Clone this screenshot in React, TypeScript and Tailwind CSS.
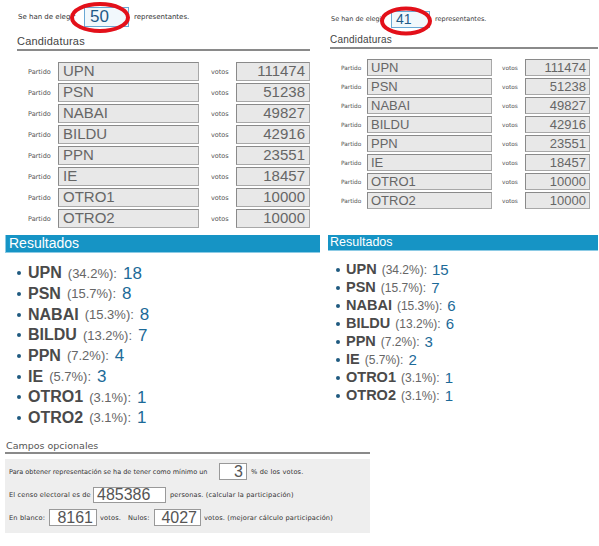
import React from 'react';

const parties = [
  { name: 'UPN', votes: 111474, pct: '34.2', left: 18, right: 15 },
  { name: 'PSN', votes: 51238, pct: '15.7', left: 8, right: 7 },
  { name: 'NABAI', votes: 49827, pct: '15.3', left: 8, right: 6 },
  { name: 'BILDU', votes: 42916, pct: '13.2', left: 7, right: 6 },
  { name: 'PPN', votes: 23551, pct: '7.2', left: 4, right: 3 },
  { name: 'IE', votes: 18457, pct: '5.7', left: 3, right: 2 },
  { name: 'OTRO1', votes: 10000, pct: '3.1', left: 1, right: 1 },
  { name: 'OTRO2', votes: 10000, pct: '3.1', left: 1, right: 1 },
];

const small = "font-['DejaVu_Sans',Verdana,sans-serif] text-[#333] whitespace-nowrap";
const box = "bg-[#e8e8e8] border border-[#a8a8a8] border-t-[#8a8a8a] border-l-[#8a8a8a] text-[#666] font-['Liberation_Sans',Arial,sans-serif] flex items-center";

const Ellipse = ({ cx, cy, rx, ry }: { cx: number; cy: number; rx: number; ry: number }) => (
  <svg className="absolute left-0 top-0 pointer-events-none" width={599} height={60}>
    <ellipse cx={cx} cy={cy} rx={rx} ry={ry} fill="none" stroke="#e3101a" strokeWidth="4" />
  </svg>
);

export default function App() {
  return (
    <div className="relative w-[599px] h-[546px] bg-white overflow-hidden font-['Liberation_Sans',Arial,sans-serif]">
      <div className="flex h-[437px]">
        {/* Left capture */}
        <div className="w-[320px] shrink-0">
          <div className="flex items-center h-[20px] mt-[7px] pl-[18px]">
            <span className={`${small} w-[66px] text-[7px]`}>Se han de elegir</span>
            <div className="w-[45px] h-[20px] bg-[#f1f8fc] border border-[#6aa8d4] flex items-center pl-[5px] text-[17px] text-[#1f5b88]">50</div>
            <span className={`${small} ml-[5px] text-[7px]`}>representantes.</span>
          </div>
          <div className="ml-[17px] w-[293px] mt-[6px] text-[11px] leading-[16px] text-[#444] border-b-2 border-[#8a8a8a] tracking-[0.2px]">Candidaturas</div>
          <div className="mt-[11px] flex flex-col gap-[2px]">
            {parties.map((p) => (
              <div key={p.name} className="flex items-center h-[19px] pl-[28px]">
                <span className={`${small} w-[30px] text-[6.5px] text-[#555] pt-[3px]`}>Partido</span>
                <div className={`${box} w-[141px] h-[19px] pl-[4px] text-[15px]`}>{p.name}</div>
                <span className={`${small} w-[25px] ml-[12px] text-[6.5px] text-[#555] pt-[3px]`}>votos</span>
                <div className={`${box} w-[74px] h-[19px] pr-[4px] justify-end text-[15px]`}>{p.votes}</div>
              </div>
            ))}
          </div>
          <div className="ml-[5px] w-[315px] h-[18px] mt-[7px] bg-[#1694c5] border-b border-[#8ccbe5] border-l border-l-[#8ccbe5] text-white text-[14px] leading-[17px] pl-[3px]">Resultados</div>
          <ul className="mt-[10px] pl-[17px]">
            {parties.map((p) => (
              <li key={p.name} className="flex items-center h-[20.7px]">
                <span className="w-[4px] h-[4px] rounded-full bg-[#1f5a80] mr-[7px]" />
                <span className="font-bold text-[16px] text-[#4a4a4a]">{p.name}</span>
                <span className="ml-[6px] text-[13px] text-[#666]">({p.pct}%):</span>
                <span className="ml-[6px] text-[17px] text-[#1c6a98]">{p.left}</span>
              </li>
            ))}
          </ul>
        </div>

        {/* Right capture */}
        <div className="ml-[8px] w-[271px]">
          <div className="flex items-center h-[17px] mt-[11px] pl-[3px]">
            <span className={`${small} w-[60px] text-[6.5px]`}>Se han de elegir</span>
            <div className="w-[39px] h-[17px] bg-[#f1f8fc] border border-[#6aa8d4] flex items-center pl-[4px] text-[14px] text-[#1f5b88]">41</div>
            <span className={`${small} ml-[5px] text-[6.5px]`}>representantes.</span>
          </div>
          <div className="ml-[2px] w-[268px] mt-[5px] text-[10px] leading-[14px] text-[#444] border-b-2 border-[#8a8a8a] tracking-[0.2px]">Candidaturas</div>
          <div className="mt-[10px] flex flex-col gap-[2px]">
            {parties.map((p) => (
              <div key={p.name} className="flex items-center h-[17px] pl-[13px]">
                <span className={`${small} w-[26px] text-[5.8px] text-[#555] pt-[2px]`}>Partido</span>
                <div className={`${box} w-[125px] h-[17px] pl-[3px] text-[13px]`}>{p.name}</div>
                <span className={`${small} w-[23px] ml-[10px] text-[5.8px] text-[#555] pt-[2px]`}>votos</span>
                <div className={`${box} w-[65px] h-[17px] pr-[3px] justify-end text-[13px]`}>{p.votes}</div>
              </div>
            ))}
          </div>
          <div className="w-[270px] h-[16px] mt-[26px] bg-[#1694c5] border-b border-[#8ccbe5] text-white text-[12.5px] leading-[15px] pl-[2px]">Resultados</div>
          <ul className="mt-[10px] pl-[8px]">
            {parties.map((p) => (
              <li key={p.name} className="flex items-center h-[18px]">
                <span className="w-[4px] h-[4px] rounded-full bg-[#1f5a80] mr-[6px]" />
                <span className="font-bold text-[14.5px] text-[#4a4a4a]">{p.name}</span>
                <span className="ml-[5px] text-[12px] text-[#666]">({p.pct}%):</span>
                <span className="ml-[5px] text-[15px] text-[#1c6a98]">{p.right}</span>
              </li>
            ))}
          </ul>
        </div>
      </div>

      {/* Optional fields */}
      <div className="pl-[5px] mt-[3px]">
        <div className="w-[365px] text-[9.5px] leading-[12px] pl-[1px] text-[#555] border-b-2 border-[#8a8a8a] font-['DejaVu_Sans',Verdana,sans-serif]">Campos opcionales</div>
        <div className="w-[365px] h-[74px] mt-[5px] bg-[#eeeeee] pl-[4px] pt-[4px]">
          <div className="flex items-center h-[17px]">
            <span className={`${small} w-[210px] text-[6.5px] pt-[2px]`}>Para obtener representación se ha de tener como mínimo un</span>
            <div className="w-[28px] h-[17px] bg-white border border-[#999] flex items-center justify-end pr-[3px] text-[16px] text-[#555]">3</div>
            <span className={`${small} ml-[4px] text-[6.6px] tracking-[0.15px] pt-[2px]`}>% de los votos.</span>
          </div>
          <div className="flex items-center h-[16px] mt-[7px]">
            <span className={`${small} w-[84px] text-[6.6px] tracking-[0.15px] pt-[2px]`}>El censo electoral es de</span>
            <div className="w-[73px] h-[16px] bg-white border border-[#999] flex items-center pl-[3px] text-[16px] text-[#555]">485386</div>
            <span className={`${small} ml-[4px] text-[6.6px] tracking-[0.15px] pt-[2px]`}>personas. (calcular la participación)</span>
          </div>
          <div className="flex items-center h-[17px] mt-[6px]">
            <span className={`${small} w-[40px] text-[6.6px] tracking-[0.15px] pt-[2px]`}>En blanco:</span>
            <div className="w-[48px] h-[17px] bg-white border border-[#999] flex items-center justify-end pr-[3px] text-[16px] text-[#555]">8161</div>
            <span className={`${small} w-[28px] ml-[3px] text-[6.6px] tracking-[0.15px] pt-[2px]`}>votos.</span>
            <span className={`${small} w-[26px] text-[6.6px] tracking-[0.15px] pt-[2px]`}>Nulos:</span>
            <div className="w-[47px] h-[17px] bg-white border border-[#999] flex items-center justify-end pr-[3px] text-[16px] text-[#555]">4027</div>
            <span className={`${small} ml-[3px] text-[6.6px] tracking-[0.15px] pt-[2px]`}>votos. (mejorar cálculo participación)</span>
          </div>
        </div>
      </div>

      {/* red annotation rings */}
      <Ellipse cx={100} cy={17.5} rx={28} ry={13.5} />
      <Ellipse cx={406} cy={21} rx={24} ry={12.5} />
    </div>
  );
}
